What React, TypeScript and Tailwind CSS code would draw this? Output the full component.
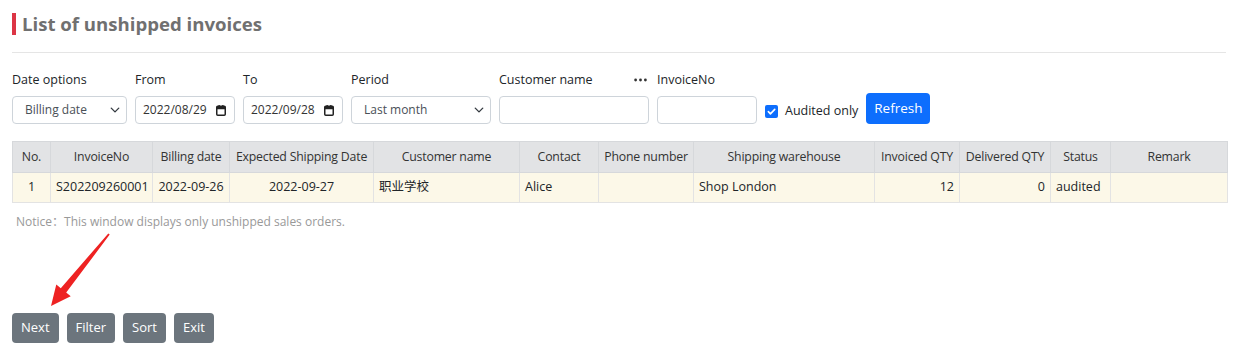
import React from "react";

const font = { fontFamily: '"Open Sans", "Noto Sans CJK SC", sans-serif' };

function Chevron() {
  return (
    <svg width="10" height="10" viewBox="0 0 16 16" className="shrink-0">
      <path d="M2 5l6 6 6-6" fill="none" stroke="#343a40" strokeWidth="2.2" strokeLinecap="round" strokeLinejoin="round" />
    </svg>
  );
}

function Cal() {
  return (
    <svg width="10" height="11" viewBox="0 0 10 11" className="shrink-0">
      <rect x="0.75" y="1.25" width="8.5" height="9" rx="1" fill="none" stroke="#222" strokeWidth="1.5" />
      <rect x="0.75" y="1.25" width="8.5" height="3" fill="#222" />
      <rect x="2.5" y="0" width="1.3" height="2" fill="#222" />
      <rect x="6.2" y="0" width="1.3" height="2" fill="#222" />
    </svg>
  );
}

function Dots() {
  return (
    <svg width="13" height="4" viewBox="0 0 13 4" className="mr-[2px]">
      <circle cx="1.6" cy="2" r="1.4" fill="#333" />
      <circle cx="6.5" cy="2" r="1.4" fill="#333" />
      <circle cx="11.4" cy="2" r="1.4" fill="#333" />
    </svg>
  );
}

function Field({ label, width, children, extra }: { label: string; width: number; children?: React.ReactNode; extra?: React.ReactNode }) {
  return (
    <div className="flex flex-col" style={{ width }}>
      <div className="flex h-[17px] items-center justify-between text-[12.5px] leading-[17px] text-[#212529]">
        <span>{label}</span>
        {extra}
      </div>
      <div className="mt-2 flex h-[28px] items-center rounded-[4px] border border-[#ced4da] bg-white text-[12px] text-[#495057]">
        {children}
      </div>
    </div>
  );
}

const cols = [
  { h: "No.", w: 38, a: "text-center" },
  { h: "InvoiceNo", w: 102, a: "text-center" },
  { h: "Billing date", w: 77, a: "text-center" },
  { h: "Expected Shipping Date", w: 144, a: "text-center" },
  { h: "Customer name", w: 146, a: "text-left" },
  { h: "Contact", w: 79, a: "text-left" },
  { h: "Phone number", w: 95, a: "text-left" },
  { h: "Shipping warehouse", w: 181, a: "text-left" },
  { h: "Invoiced QTY", w: 85, a: "text-right" },
  { h: "Delivered QTY", w: 91, a: "text-right" },
  { h: "Status", w: 60, a: "text-left" },
  { h: "Remark", w: 117, a: "text-left" },
];

const row = ["1", "S202209260001", "2022-09-26", "2022-09-27", "职业学校", "Alice", "", "Shop London", "12", "0", "audited", ""];

export default function App() {
  return (
    <div className="relative h-[351px] w-[1236px] overflow-hidden bg-white" style={font}>
      <div className="px-3 pt-[13px]">
        <div className="flex h-[22px] items-center">
          <div className="h-[22px] w-[4px] bg-[#dc3545]" />
          <div className="ml-[6px] text-[18.6px] font-bold leading-[22px] text-[#707070]">List of unshipped invoices</div>
        </div>
        <div className="mt-[17px] mr-[-2px] h-px bg-[#e5e5e5]" />

        <div className="mt-[18px] flex items-end gap-2">
          <Field label="Date options" width={115}>
            <div className="flex w-full items-center justify-between pl-3 pr-[6px]">
              <span>Billing date</span>
              <Chevron />
            </div>
          </Field>
          <Field label="From" width={100}>
            <div className="flex w-full items-center justify-between pl-[7px] pr-[8px] text-[12px] text-[#333]">
              <span>2022/08/29</span>
              <Cal />
            </div>
          </Field>
          <Field label="To" width={100}>
            <div className="flex w-full items-center justify-between pl-[7px] pr-[8px] text-[12px] text-[#333]">
              <span>2022/09/28</span>
              <Cal />
            </div>
          </Field>
          <Field label="Period" width={140}>
            <div className="flex w-full items-center justify-between pl-3 pr-[6px]">
              <span>Last month</span>
              <Chevron />
            </div>
          </Field>
          <Field label="Customer name" width={150} extra={<Dots />} />
          <Field label="InvoiceNo" width={100} />
          <div className="flex h-[28px] items-center pt-[3px]">
            <span className="flex h-[13px] w-[13px] items-center justify-center rounded-[2px] bg-[#0d6efd]">
              <svg width="9" height="9" viewBox="0 0 10 10">
                <path d="M1.5 5.2l2.3 2.4L8.6 2.6" fill="none" stroke="white" strokeWidth="1.8" strokeLinecap="round" strokeLinejoin="round" />
              </svg>
            </span>
            <span className="ml-[7px] text-[12.5px] text-[#212529]">Audited only</span>
          </div>
          <button className="h-[31px] w-[64px] rounded-[4px] bg-[#0d6efd] text-[13.5px] text-white">Refresh</button>
        </div>

        <table className="mt-[17px] table-fixed border-collapse text-[12.5px] text-[#212529]" style={{ width: 1215 }}>
          <colgroup>
            {cols.map((c, i) => (
              <col key={i} style={{ width: c.w }} />
            ))}
          </colgroup>
          <thead>
            <tr className="h-[31px] bg-[#e2e3e5]">
              {cols.map((c, i) => (
                <th key={i} className="whitespace-nowrap border border-[#d6d8db] px-[2px] text-center text-[12.3px] font-normal tracking-[-0.2px] text-[#333]">
                  {c.h}
                </th>
              ))}
            </tr>
          </thead>
          <tbody>
            <tr className="h-[30px] bg-[#fcf8e8]">
              {row.map((v, i) => (
                <td key={i} className={`whitespace-nowrap border border-[#e3e3e3] px-[5px] ${cols[i].a}`}>
                  {v}
                </td>
              ))}
            </tr>
          </tbody>
        </table>

        <div className="mt-[10px] pl-1 text-[12px] text-[#999]">Notice：This window displays only unshipped sales orders.</div>

        <div className="mt-[82px] flex gap-2">
          {["Next", "Filter", "Sort", "Exit"].map((b) => (
            <button key={b} className="h-[30px] rounded-[4px] bg-[#6c757d] px-[9px] text-[13px] text-white">
              {b}
            </button>
          ))}
        </div>
      </div>

      <svg className="pointer-events-none absolute left-0 top-0" width="1236" height="351">
        <polygon
          points="108.3,233.4 60.8,288.2 56.3,284.6 51,306 70.7,296.2 66.2,292.6 109.7,234.6"
          fill="#ee2222"
        />
      </svg>
    </div>
  );
}
